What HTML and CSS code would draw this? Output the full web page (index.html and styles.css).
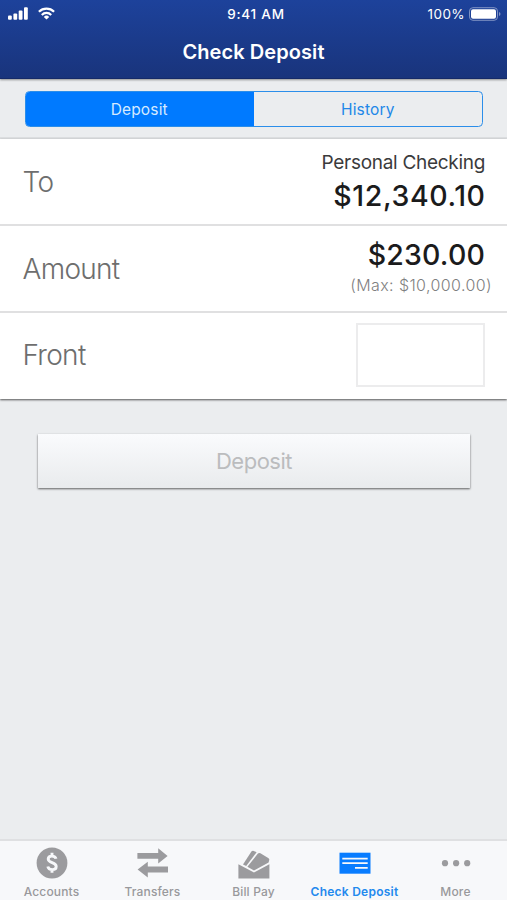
FILE: index.html
```html
<!DOCTYPE html>
<html lang="en">
<head>
<meta charset="utf-8">
<title>Check Deposit</title>
<link rel="stylesheet" href="styles.css">
</head>
<body>
<div class="app">
  <header class="header">
    <div class="status">
      <div class="signals">
        <svg width="21" height="13" viewBox="0 0 21 13" fill="#fff"><rect x="0" y="8.5" width="3.8" height="4.2" rx="1"/><rect x="5.4" y="6.4" width="3.8" height="6.3" rx="1"/><rect x="10.7" y="3.6" width="3.8" height="9.1" rx="1"/><rect x="16" y="0.3" width="3.8" height="12.4" rx="1"/></svg>
        <svg class="wifi" width="17" height="13" viewBox="0 0 17 13" fill="none" stroke="#fff" stroke-width="2.2"><path d="M.9 4.8a10.8 10.8 0 0 1 15.2 0"/><path d="M3.8 7.9a6.6 6.6 0 0 1 9.4 0"/><path d="M8.5 12.4 5.8 9.9a3.9 3.9 0 0 1 5.4 0Z" fill="#fff" stroke="none"/></svg>
      </div>
      <div class="clock">9:41 AM</div>
      <div class="power"><span>100%</span>
        <svg width="32" height="14" viewBox="0 0 32 14"><rect x=".5" y=".7" width="28" height="12.6" rx="3.4" fill="none" stroke="#8093c4"/><rect x="2" y="2.2" width="25" height="9.6" rx="2" fill="#fff"/><path d="M30 5v4q1.5-.6 1.5-2T30 5Z" fill="#8093c4"/></svg>
      </div>
    </div>
    <h1 class="title">Check Deposit</h1>
  </header>
  <div class="filter">
    <div class="segments">
      <div class="segment selected">Deposit</div>
      <div class="segment">History</div>
    </div>
  </div>
  <main class="form">
    <div class="row"><span class="label">To</span>
      <div class="values"><div class="account">Personal Checking</div><div class="money balance">$12,340.10</div></div>
    </div>
    <div class="row"><span class="label">Amount</span>
      <div class="values entry"><div class="money">$230.00</div><div class="limit">(Max: $10,000.00)</div></div>
    </div>
    <div class="row last"><span class="label">Front</span><div class="photo"></div></div>
  </main>
  <div class="action"><button class="submit" disabled>Deposit</button></div>
  <nav class="tabs">
    <div class="tab"><svg width="32" height="32" viewBox="0 0 32 32"><circle cx="16" cy="16" r="15.4" fill="#9b9b9e"/><path d="M20 11.8C19.2 8.2 12.3 8.2 12.2 12c0 4.4 8 2.8 8 7.4 0 4.2-7.5 4.3-8.4.1M16 5.8v3.4M16 22.3v3.4" fill="none" stroke="#f7f8fa" stroke-width="2.9"/></svg><span>Accounts</span></div>
    <div class="tab"><svg width="32" height="32" viewBox="0 0 32 32" fill="#9b9b9e"><path d="M.4 6h20.8V1.2L30.6 9l-9.4 7.6v-4.9H.4zM31 19.6H10.8v-4.8L.6 22.6l10.2 8v-5H31z"/></svg><span>Transfers</span></div>
    <div class="tab"><svg width="32" height="32" viewBox="0 0 32 32" fill="#9b9b9e"><path d="m.4 17.2 15.6 8.2 15.4-8.2v14.4H.4z"/><path d="M5 17.6 13.4 4.6q1-1.2 2.4-.6l2.8 1.3-10.4 13.8z"/><path d="m9.4 19.8 10.3-13q1.1-1.4 2.7-.5l7.8 4.6q1.6 1.1.9 2.6l-.5 2L16 23.4z"/></svg><span>Bill Pay</span></div>
    <div class="tab active"><svg width="32" height="32" viewBox="0 0 32 32"><path fill="#087cff" d="M.5 5.7h31v21H.5z"/><path d="M3.3 11.7h25.4M3.3 16.2h25.4M16 20.9h12.7" stroke="#f7f8fa" stroke-width="1.8"/></svg><span>Check Deposit</span></div>
    <div class="tab"><svg width="32" height="32" viewBox="0 0 32 32" fill="#9b9b9e"><circle cx="5" cy="16.2" r="3.1"/><circle cx="16.1" cy="16.2" r="3.1"/><circle cx="27.2" cy="16.2" r="3.1"/></svg><span>More</span></div>
  </nav>
</div>
</body>
</html>
```
FILE: styles.css
```css
* { box-sizing: border-box; }
body { margin: 0; font-family: Inter, "Liberation Sans", sans-serif; }
svg { display: block; flex: none; }
.app { display: flex; flex-direction: column; height: 900px; width: 507px; background: #ebedef; overflow: hidden; }
.header { height: 79px; flex: none; background: linear-gradient(#1d429b, #19347c); border-bottom: 1px solid #152a68; box-shadow: 0 1px 2px rgba(0,0,0,.4); color: #fff; }
.status { display: grid; grid-template-columns: 1fr auto 1fr; align-items: center; height: 27px; padding: 0 6px 0 8px; font-size: 13.5px; }
.signals { display: flex; gap: 9px; }
.clock { font-weight: 500; letter-spacing: .75px; margin-left: 3px; }
.power { display: flex; justify-content: flex-end; align-items: center; gap: 4px; letter-spacing: .4px; }
.title { margin: 0; text-align: center; font-size: 20px; font-weight: 600; line-height: 51px; letter-spacing: .08px; }
.filter { height: 60px; flex: none; padding: 12px 24px 0 25px; border-bottom: 2px solid #dcdee0; }
.segments { display: flex; height: 36px; border: 1px solid #2b8eea; border-radius: 4.5px; overflow: hidden; }
.segment { flex: 1; color: #2187e8; font-size: 15.5px; line-height: 35px; letter-spacing: .15px; text-align: center; }
.selected { background: #007aff; color: #d5eaff; margin-left: -1px; }
.form { flex: none; background: #fff; box-shadow: 0 1px 2px rgba(0,0,0,.65); }
.row { display: flex; justify-content: space-between; align-items: center; height: 87px; padding: 0 22px 0 23px; border-bottom: 2px solid #e0e0e1; }
.last { border-bottom: 0; height: 86px; padding-bottom: 2px; }
.label { font-size: 28px; font-weight: 300; letter-spacing: -.7px; color: #6e6e6e; margin-left: -.5px; }
.values { display: flex; flex-direction: column; align-items: flex-end; color: #1b1b1c; white-space: nowrap; }
.entry { padding-bottom: 5px; }
.account { font-size: 19px; line-height: 28px; letter-spacing: -.3px; color: #3b3b3c; }
.money { font-size: 28.5px; line-height: 38px; font-weight: 450; letter-spacing: .15px; }
.balance { letter-spacing: .6px; margin-right: -.6px; }
.limit { font-size: 16px; line-height: 22px; font-weight: 300; letter-spacing: .4px; color: #7f7f81; margin-right: -7px; }
.photo { width: 129px; height: 64px; border: 2px solid #ececed; }
.action { flex: 1; padding: 35px 37px 0 38px; }
.submit { display: block; width: 100%; height: 54px; padding: 0; border: 0; background: linear-gradient(#fafbfd, #e9ebed); box-shadow: 0 1px 2px rgba(0,0,0,.6); color: #bbbcbe; font: 400 22px Inter, sans-serif; letter-spacing: -.5px; }
.tabs { display: flex; flex: none; height: 61px; padding: 6px 1px 0; border-top: 2px solid #dfe0e2; background: #f7f8fa; }
.tab { display: flex; flex-direction: column; align-items: center; flex: 1 1 0; width: 0; color: #99999c; font-size: 12px; font-weight: 500; letter-spacing: .15px; line-height: 18px; white-space: nowrap; }
.tab span { margin-top: 4px; }
.active { color: #2389ee; font-weight: 600; letter-spacing: .25px; }
```
